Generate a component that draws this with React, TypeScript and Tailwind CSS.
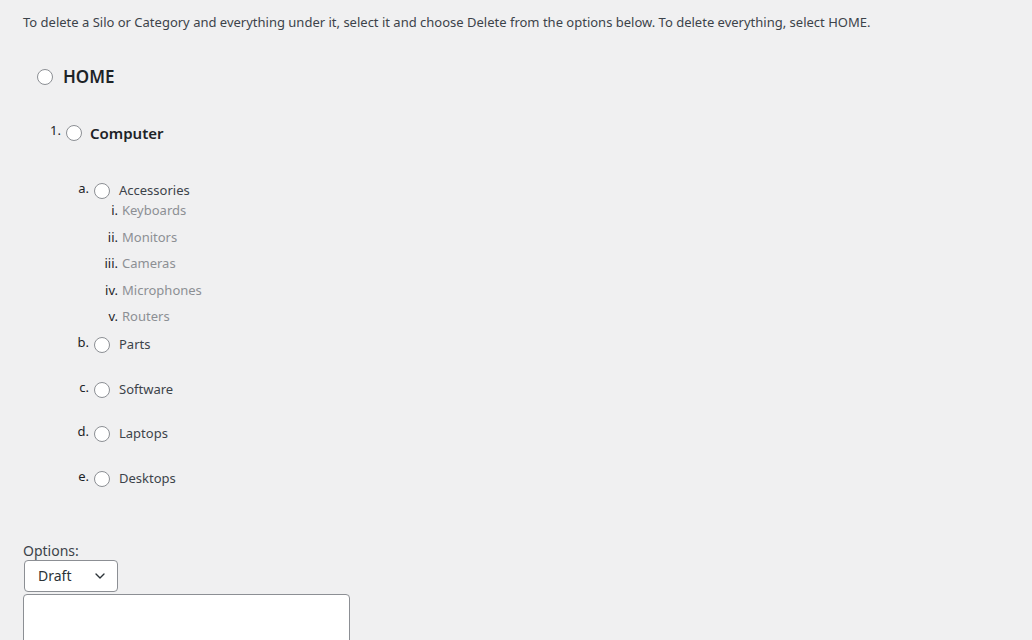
import React, { useState } from "react";
import { ChevronDown } from "lucide-react";

type Node = { id: string; label: string };

const silos: Node[] = [
  { id: "parts", label: "Parts" },
  { id: "software", label: "Software" },
  { id: "laptops", label: "Laptops" },
  { id: "desktops", label: "Desktops" },
];

const subs = ["Keyboards", "Monitors", "Cameras", "Microphones", "Routers"];
const roman = ["i.", "ii.", "iii.", "iv.", "v."];
const alpha = ["b.", "c.", "d.", "e."];

const Radio = ({ checked, onClick }: { checked: boolean; onClick: () => void }) => (
  <button
    onClick={onClick}
    className="w-4 h-4 shrink-0 rounded-full border border-[#8c8f94] bg-white flex items-center justify-center"
  >
    {checked && <span className="w-2 h-2 rounded-full bg-[#3582c4]" />}
  </button>
);

const App: React.FC = () => {
  const [selected, setSelected] = useState<string>("");

  return (
    <div className="min-h-screen bg-[#f0f0f1] text-[#3c434a] font-['Noto_Sans',sans-serif] text-[13px] px-[23px] pt-[13px]">
      <p className="leading-[18px]">
        To delete a Silo or Category and everything under it, select it and choose Delete from the options below. To delete everything, select HOME.
      </p>

      <div className="flex items-center gap-[10px] pl-[14px] mt-[34px] h-[24px]">
        <Radio checked={selected === "home"} onClick={() => setSelected("home")} />
        <span className="text-[17px] font-semibold text-[#1d2327]">HOME</span>
      </div>

      <div className="flex items-center mt-[33px] h-[22px]">
        <span className="w-[43px] text-right pr-[5px] text-[#1d2327] -mt-[4px]">1.</span>
        <Radio checked={selected === "computer"} onClick={() => setSelected("computer")} />
        <span className="ml-[8px] text-[15px] font-semibold text-[#1d2327]">Computer</span>
      </div>

      <div className="flex items-center mt-[37px] h-[20px]">
        <span className="w-[71px] text-right pr-[5px] text-[#1d2327] -mt-[4px]">a.</span>
        <Radio checked={selected === "accessories"} onClick={() => setSelected("accessories")} />
        <span className="ml-[9px]">Accessories</span>
      </div>

      <div className="flex flex-col">
        {subs.map((s, i) => (
          <div key={s} className={`flex h-[18px] ${i === 0 ? "mt-0" : "mt-[8.5px]"}`}>
            <span className="w-[99px] text-right text-[#1d2327] pr-[4px]">{roman[i]}</span>
            <span className="text-[#8c8f94]">{s}</span>
          </div>
        ))}
      </div>

      <div className="flex flex-col">
        {silos.map((s, i) => (
          <div key={s.id} className={`flex items-center h-[20px] ${i === 0 ? "mt-[10px]" : "mt-[24.5px]"}`}>
            <span className="w-[71px] text-right pr-[5px] text-[#1d2327] -mt-[4px]">{alpha[i]}</span>
            <Radio checked={selected === s.id} onClick={() => setSelected(s.id)} />
            <span className="ml-[9px]">{s.label}</span>
          </div>
        ))}
      </div>

      <div className="mt-[52px] text-[14px] leading-[19px]">Options:</div>
      <div className="relative w-[94px] h-[32px] ml-[1px] bg-white border border-[#8c8f94] rounded-[4px] flex items-center pl-[13px] text-[14px] text-[#2c3338]">
        Draft
        <ChevronDown className="absolute right-[9px] top-[7px] w-4 h-4" strokeWidth={2} />
      </div>
      <textarea className="block w-[327px] h-[80px] mt-[2px] bg-white border border-[#8c8f94] rounded-[4px] resize-none" />
    </div>
  );
};

export default App;
